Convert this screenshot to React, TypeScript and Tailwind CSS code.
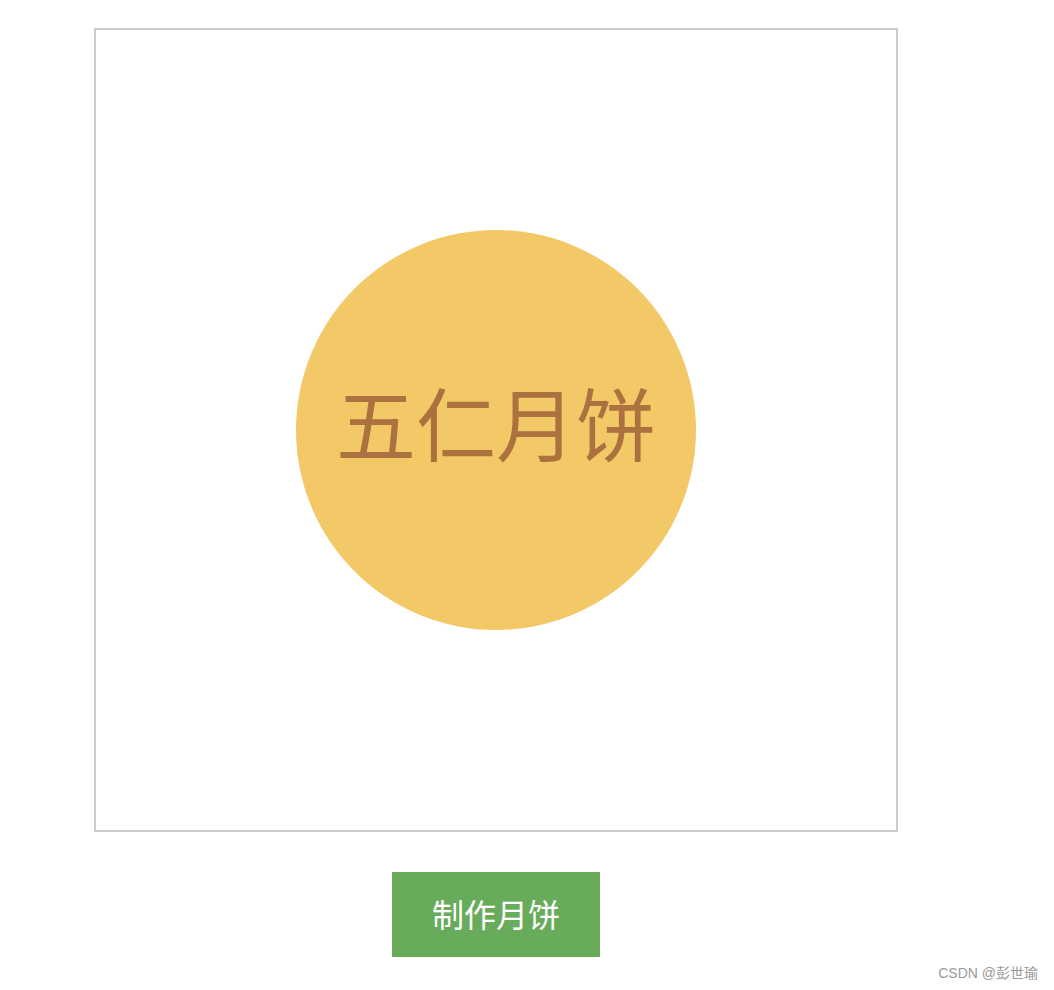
// mooncake maker demo page: a square stage with a round cake and a button under it

const cjk = { fontFamily: '"Noto Sans CJK SC", "Noto Sans", sans-serif' };

export default function App() {
  return (
    <main className="relative min-h-[990px] w-[1054px] bg-white" style={cjk}>
      <div className="ml-[94px] flex w-[804px] flex-col items-center pt-[28px]">
        {/* stage */}
        <div className="flex h-[804px] w-[804px] items-center justify-center border-2 border-[#cccccc]">
          <div className="flex h-[400px] w-[400px] items-center justify-center rounded-full bg-[#f3c967]">
            <span className="mb-[20px] text-[80px] leading-none text-[#ab713e]">五仁月饼</span>
          </div>
        </div>

        {/* action */}
        <button className="mt-[40px] flex h-[85px] w-[208px] items-center justify-center bg-[#67ab5b] pb-[3px] text-[32px] leading-none text-white">
          制作月饼
        </button>
      </div>

      <span
        className="absolute right-[16px] top-[963px] text-[14px] text-[#999999]"
        style={{ fontFamily: '"Liberation Sans", "Noto Sans CJK SC", sans-serif' }}
      >
        CSDN @彭世瑜
      </span>
    </main>
  );
}
